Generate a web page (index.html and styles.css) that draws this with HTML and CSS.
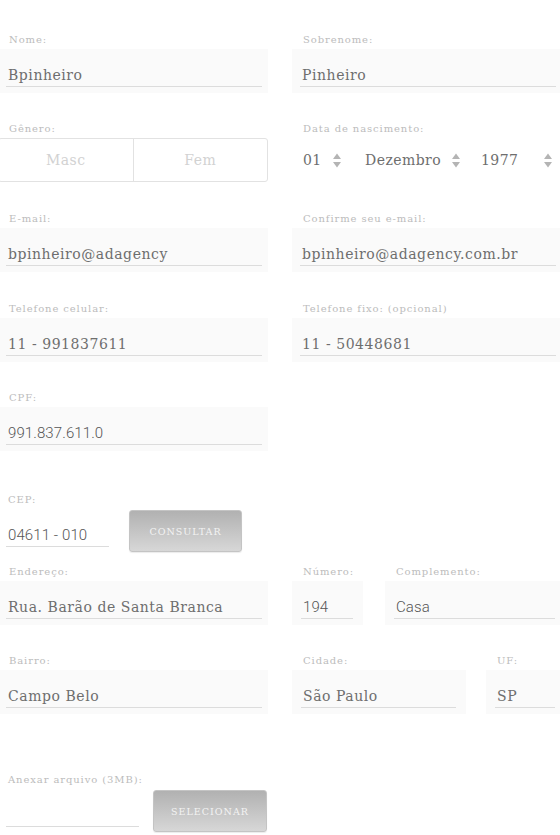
FILE: index.html
```html
<!DOCTYPE html>
<html lang="pt-BR">
<head>
<meta charset="utf-8">
<title>Cadastro</title>
<link rel="stylesheet" href="styles.css">
</head>
<body>
<form class="form">
  <div class="row r1">
    <div class="field">
      <div class="label">Nome:</div>
      <div class="box"><div class="value">Bpinheiro</div></div>
    </div>
    <div class="field">
      <div class="label">Sobrenome:</div>
      <div class="box"><div class="value">Pinheiro</div></div>
    </div>
  </div>

  <div class="row r2">
    <div class="field">
      <div class="label">Gênero:</div>
      <div class="toggle">
        <div class="opt">Masc</div>
        <div class="opt">Fem</div>
      </div>
    </div>
    <div class="field">
      <div class="label">Data de nascimento:</div>
      <div class="dates">
        <div class="sel sel-d"><span>01</span><svg class="arr" width="8" height="15" viewBox="0 0 8 15"><polygon points="0,6 4,0.5 8,6"/><polygon points="0,9 8,9 4,14.5"/></svg></div>
        <div class="sel sel-m"><span>Dezembro</span><svg class="arr" width="8" height="15" viewBox="0 0 8 15"><polygon points="0,6 4,0.5 8,6"/><polygon points="0,9 8,9 4,14.5"/></svg></div>
        <div class="sel sel-y"><span>1977</span><svg class="arr" width="8" height="15" viewBox="0 0 8 15"><polygon points="0,6 4,0.5 8,6"/><polygon points="0,9 8,9 4,14.5"/></svg></div>
      </div>
    </div>
  </div>

  <div class="row r3">
    <div class="field">
      <div class="label">E-mail:</div>
      <div class="box"><div class="value">bpinheiro@adagency</div></div>
    </div>
    <div class="field">
      <div class="label">Confirme seu e-mail:</div>
      <div class="box"><div class="value">bpinheiro@adagency.com.br</div></div>
    </div>
  </div>

  <div class="row r4">
    <div class="field">
      <div class="label">Telefone celular:</div>
      <div class="box"><div class="value">11 - 991837611</div></div>
    </div>
    <div class="field">
      <div class="label">Telefone fixo: (opcional)</div>
      <div class="box"><div class="value">11 - 50448681</div></div>
    </div>
  </div>

  <div class="row r5">
    <div class="field">
      <div class="label">CPF:</div>
      <div class="box"><div class="value sans">991.837.611.0</div></div>
    </div>
  </div>

  <div class="row-flex r6">
    <div class="field cep">
      <div class="label lab-plain">CEP:</div>
      <div class="value sans">04611 - 010</div>
    </div>
    <button type="button" class="btn btn-cep">CONSULTAR</button>
  </div>

  <div class="row r7">
    <div class="field">
      <div class="label">Endereço:</div>
      <div class="box"><div class="value">Rua. Barão de Santa Branca</div></div>
    </div>
    <div class="split split-end">
      <div class="field num">
        <div class="label">Número:</div>
        <div class="box"><div class="value sans">194</div></div>
      </div>
      <div class="field grow">
        <div class="label">Complemento:</div>
        <div class="box"><div class="value sans">Casa</div></div>
      </div>
    </div>
  </div>

  <div class="row r8">
    <div class="field">
      <div class="label">Bairro:</div>
      <div class="box"><div class="value">Campo Belo</div></div>
    </div>
    <div class="split split-city">
      <div class="field city">
        <div class="label">Cidade:</div>
        <div class="box"><div class="value">São Paulo</div></div>
      </div>
      <div class="field grow">
        <div class="label">UF:</div>
        <div class="box"><div class="value">SP</div></div>
      </div>
    </div>
  </div>

  <div class="row-flex r9">
    <div class="field file">
      <div class="label lab-plain">Anexar arquivo (3MB):</div>
      <div class="value"></div>
    </div>
    <button type="button" class="btn btn-file">SELECIONAR</button>
  </div>
</form>
</body>
</html>
```

FILE: styles.css
```css
html, body {
  margin: 0;
  padding: 0;
  background: #ffffff;
}
body {
  width: 560px;
  height: 835px;
  overflow: hidden;
  font-family: "DejaVu Serif", "Liberation Serif", serif;
  color: #6e6e6e;
}
.form {
  margin-left: -2px;
  padding-top: 34px;
  display: flex;
  flex-direction: column;
}
.row {
  display: grid;
  grid-template-columns: 270px 270px;
  column-gap: 24px;
}
.row-flex {
  display: flex;
  align-items: flex-start;
}
.r2 { margin-top: 30px; }
.r3 { margin-top: 31px; }
.r4 { margin-top: 31px; }
.r5 { margin-top: 30px; }
.r6 { margin-top: 43px; }
.r7 { margin-top: 14px; }
.r8 { margin-top: 30px; }
.r9 { margin-top: 60px; }

.field {
  display: flex;
  flex-direction: column;
}
.label {
  height: 12px;
  line-height: 12px;
  font-size: 10px;
  letter-spacing: 0.9px;
  color: #bcbcbc;
  padding-left: 11px;
  margin-bottom: 3px;
  white-space: nowrap;
}
.lab-plain { padding-left: 10px; }
.box {
  background: #fafafa;
  height: 44px;
  padding: 0 6px 0 8px;
  box-sizing: border-box;
}
.value {
  margin-top: 15px;
  height: 22px;
  line-height: 23px;
  border-bottom: 1px solid #dcdcdc;
  padding-left: 2px;
  font-size: 14px;
  letter-spacing: 0.55px;
  color: #6e6e6e;
  white-space: nowrap;
  overflow: hidden;
}
.sans {
  font-family: Roboto, "Liberation Sans", sans-serif;
  font-size: 15px;
  letter-spacing: 0.1px;
  font-weight: 300;
  color: #555555;
}

.toggle {
  display: flex;
  height: 44px;
  box-sizing: border-box;
  border: 1px solid #e2e2e2;
  border-radius: 3px;
}
.opt {
  flex: 1;
  display: flex;
  align-items: center;
  justify-content: center;
  font-size: 14px;
  letter-spacing: 0.5px;
  color: #d2d2d2;
}
.opt + .opt { border-left: 1px solid #e2e2e2; }

.dates {
  display: flex;
  height: 44px;
  align-items: center;
}
.sel {
  display: flex;
  align-items: center;
  justify-content: space-between;
  box-sizing: border-box;
  font-size: 14px;
  letter-spacing: 0.45px;
  color: #6e6e6e;
  padding-right: 8px;
}
.sel-d { width: 58px; padding-left: 11px; padding-right: 9px; }
.sel-m { width: 118px; padding-left: 15px; }
.sel-y { width: 92px; padding-left: 13px; }
.arr { fill: #b4b4b4; display: block; }

.cep { width: 111px; }
.cep .value, .file .value { margin-left: 8px; margin-top: 15px; }
.file { width: 141px; }

.btn {
  box-sizing: border-box;
  height: 42px;
  margin-top: 16px;
  border: 1px solid #c4c4c4;
  border-radius: 3px;
  background: linear-gradient(#b1b1b1, #d7d7d7);
  box-shadow: 0 1px 1px rgba(0,0,0,0.08);
  color: #f3f3f3;
  font-family: "DejaVu Serif", "Liberation Serif", serif;
  font-size: 9.5px;
  letter-spacing: 1px;
  padding: 0;
}
.btn-cep { width: 113px; margin-left: 20px; }
.btn-file { width: 114px; margin-left: 14px; }

.split {
  display: flex;
}
.split-end { column-gap: 22px; }
.split-city { column-gap: 20px; }
.num { width: 71px; flex: none; }
.num .box { padding: 0 10px 0 9px; }
.city { width: 174px; flex: none; }
.city .box { padding: 0 10px 0 9px; }
.grow { flex: 1; }
.grow .box { padding: 0 7px 0 9px; }
```
